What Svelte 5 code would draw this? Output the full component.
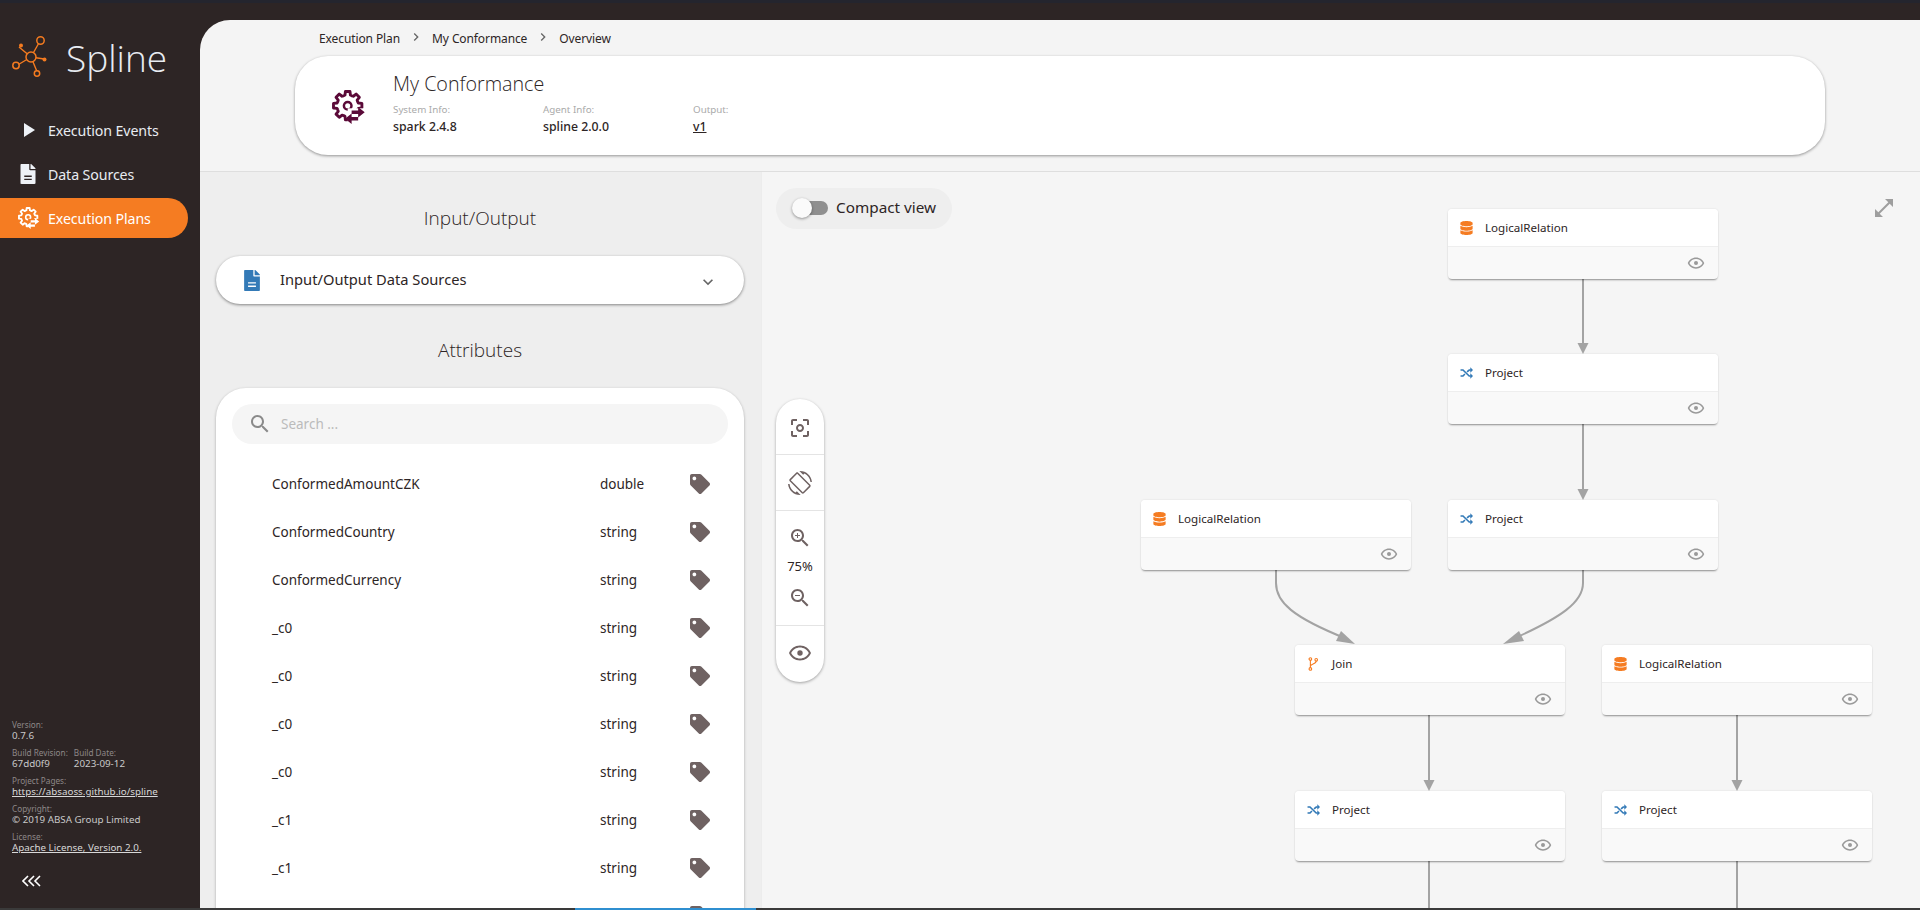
<script>
	const attributes = [
		["ConformedAmountCZK", "double"],
		["ConformedCountry", "string"],
		["ConformedCurrency", "string"],
		["_c0", "string"],
		["_c0", "string"],
		["_c0", "string"],
		["_c0", "string"],
		["_c1", "string"],
		["_c1", "string"],
		["", ""],
	];

	// page coordinates minus the canvas origin (762, 172)
	const nodes = [
		{ x: 686, y: 37, kind: "read", name: "LogicalRelation" },
		{ x: 686, y: 182, kind: "project", name: "Project" },
		{ x: 379, y: 328, kind: "read", name: "LogicalRelation" },
		{ x: 686, y: 328, kind: "project", name: "Project" },
		{ x: 533, y: 473, kind: "join", name: "Join" },
		{ x: 840, y: 473, kind: "read", name: "LogicalRelation" },
		{ x: 533, y: 619, kind: "project", name: "Project" },
		{ x: 840, y: 619, kind: "project", name: "Project" },
	];

	const edges = [
		{ d: "M821 106V171", tip: "815.5,171 826.5,171 821,182" },
		{ d: "M821 252V317", tip: "815.5,317 826.5,317 821,328" },
		{ d: "M514 397V411C514 430 530 445 585 467", tip: "579,459 574,469 593,472" },
		{ d: "M821 397V411C821 430 800 445 751 467", tip: "757,459 762,469 741,472" },
		{ d: "M667 543V608", tip: "661.5,608 672.5,608 667,619" },
		{ d: "M975 543V608", tip: "969.5,608 980.5,608 975,619" },
		{ d: "M667 688V740", tip: "" },
		{ d: "M975 688V740", tip: "" },
	];

	const gearPath = (() => {
		let p = "";
		for (let i = 0; i < 8; i++) {
			const a = (i * Math.PI) / 4 - Math.PI / 2;
			const w = 0.2;
			const pts = [
				[8.2, a - 0.39],
				[8.4, a - w - 0.05],
				[11, a - w + 0.04],
				[11, a + w - 0.04],
				[8.4, a + w + 0.05],
				[8.2, a + 0.39],
			];
			for (const [r, t] of pts) {
				p += (p ? "L" : "M") + (12 + r * Math.cos(t)).toFixed(2) + " " + (12 + r * Math.sin(t)).toFixed(2);
			}
		}
		return p + "Z";
	})();
</script>

{#snippet gearIcon(cls, cut)}
	<svg class={cls} viewBox="0 0 26 26">
		<path d={gearPath} fill="none" stroke="currentColor" stroke-width="2.2" stroke-linejoin="round" />
		<circle cx="12" cy="12" r="2.9" fill="none" stroke="currentColor" stroke-width="1.9" />
		<rect x="12" y="14" width="14" height="12" fill={cut} />
		<path d="M15 15.6h5v-2.6l5 4-5 4v-2.6h-5z" fill="currentColor" />
		<path d="M20 20.6h-5V18l-5 4 5 4v-2.6h5z" fill="currentColor" />
	</svg>
{/snippet}

{#snippet eyeIcon(cls)}
	<svg class={cls} viewBox="0 0 24 24">
		<path d="M12 6.5c3.79 0 7.17 2.13 8.82 5.5-1.65 3.37-5.02 5.5-8.82 5.5S4.83 15.37 3.18 12C4.83 8.63 8.21 6.5 12 6.5m0-2C7 4.5 2.73 7.61 1 12c1.73 4.39 6 7.5 11 7.5s9.27-3.11 11-7.5c-1.73-4.39-6-7.5-11-7.5z" />
		<circle cx="12" cy="12" r="2.7" />
	</svg>
{/snippet}

<div class="app">
	<div class="topline"></div>
	<div class="shell">
		<aside class="sidebar">
			<div class="brand">
				<svg class="logo" viewBox="0 0 36 42">
					<g fill="none" stroke="#f47b20" stroke-width="1.4">
						<path d="M19 21L28 5M7 11L19 21M4 30L19 21M19 21L26 38M19 21L32 23" />
					</g>
					<circle cx="19" cy="21" r="5" fill="#2d2525" stroke="#f47b20" stroke-width="1.5" />
					<circle cx="28.5" cy="4.5" r="3.7" fill="#2d2525" stroke="#f47b20" stroke-width="1.5" />
					<circle cx="4" cy="29.5" r="3.2" fill="#2d2525" stroke="#f47b20" stroke-width="1.5" />
					<circle cx="25" cy="37.5" r="2.7" fill="#2d2525" stroke="#f47b20" stroke-width="1.5" />
					<circle cx="9" cy="9.5" r="2" fill="#f47b20" />
					<circle cx="32.5" cy="23.5" r="2" fill="#f47b20" />
				</svg>
				<span class="brand-name">Spline</span>
			</div>
			<nav class="nav">
				<div class="nav-item">
					<svg class="nav-icon" viewBox="0 0 16 20"><path d="M4 3L15 10L4 17z" /></svg>
					Execution Events
				</div>
				<div class="nav-item">
					<svg class="nav-icon" viewBox="0 0 384 512">
						<path fill-rule="evenodd" d="M224 136V0H24C10.7 0 0 10.7 0 24v464c0 13.3 10.7 24 24 24h336c13.3 0 24-10.7 24-24V160H248c-13.2 0-24-10.8-24-24zM96 296h192v36H96zM96 376h192v36H96z" />
						<path d="M384 121.9v6.1H256V0h6.1c6.4 0 12.5 2.5 17 7l97.9 98c4.5 4.5 7 10.6 7 16.9z" />
					</svg>
					Data Sources
				</div>
				<div class="nav-item active">
					{@render gearIcon("nav-gear", "#f57c22")}
					Execution Plans
				</div>
			</nav>
			<footer class="about">
				<div class="label">Version:</div>
				<div class="value">0.7.6</div>
				<div class="about-row">
					<div>
						<div class="label">Build Revision:</div>
						<div class="value">67dd0f9</div>
					</div>
					<div>
						<div class="label">Build Date:</div>
						<div class="value">2023-09-12</div>
					</div>
				</div>
				<div class="label">Project Pages:</div>
				<div class="value link">https://absaoss.github.io/spline</div>
				<div class="label">Copyright:</div>
				<div class="value">© 2019 ABSA Group Limited</div>
				<div class="label">License:</div>
				<div class="value link">Apache License, Version 2.0.</div>
				<svg class="collapse" viewBox="0 0 20 12">
					<path d="M6 1L1 6l5 5M12 1L7 6l5 5M18 1l-5 5 5 5" fill="none" stroke="#fff" stroke-width="1.6" />
				</svg>
			</footer>
		</aside>

		<main class="main">
			<header class="header">
				<div class="crumbs">
					<span>Execution Plan</span>
					<svg class="crumb-sep" viewBox="0 0 24 24"><path d="M10 6L8.59 7.41 13.17 12l-4.58 4.59L10 18l6-6z" /></svg>
					<span>My Conformance</span>
					<svg class="crumb-sep" viewBox="0 0 24 24"><path d="M10 6L8.59 7.41 13.17 12l-4.58 4.59L10 18l6-6z" /></svg>
					<span>Overview</span>
				</div>
				<div class="plan-card">
					{@render gearIcon("plan-gear", "#fff")}
					<div class="plan-info">
						<h1>My Conformance</h1>
						<div class="plan-meta">
							<div>
								<div class="meta-label">System Info:</div>
								<div class="meta-value">spark 2.4.8</div>
							</div>
							<div>
								<div class="meta-label">Agent Info:</div>
								<div class="meta-value">spline 2.0.0</div>
							</div>
							<div>
								<div class="meta-label">Output:</div>
								<div class="meta-value underline">v1</div>
							</div>
						</div>
					</div>
				</div>
			</header>

			<div class="panels">
				<section class="side">
					<h2>Input/Output</h2>
					<div class="accordion">
						<svg class="doc" viewBox="0 0 384 512">
							<path fill-rule="evenodd" d="M224 136V0H24C10.7 0 0 10.7 0 24v464c0 13.3 10.7 24 24 24h336c13.3 0 24-10.7 24-24V160H248c-13.2 0-24-10.8-24-24zM96 296h192v36H96zM96 376h192v36H96z" />
							<path d="M384 121.9v6.1H256V0h6.1c6.4 0 12.5 2.5 17 7l97.9 98c4.5 4.5 7 10.6 7 16.9z" />
						</svg>
						<span class="accordion-title">Input/Output Data Sources</span>
						<svg class="chevron" viewBox="0 0 24 24"><path d="M7.41 8.59L12 13.17l4.59-4.58L18 10l-6 6-6-6z" /></svg>
					</div>
					<h2 class="attr-title">Attributes</h2>
					<div class="attr-card">
						<div class="search">
							<svg class="search-icon" viewBox="0 0 24 24"><path d="M15.5 14h-.79l-.28-.27C15.41 12.59 16 11.11 16 9.5 16 5.91 13.09 3 9.5 3S3 5.91 3 9.5 5.91 16 9.5 16c1.61 0 3.09-.59 4.23-1.57l.27.28v.79l5 4.99L20.49 19l-4.99-5zm-6 0C7.01 14 5 11.99 5 9.5S7.01 5 9.5 5 14 7.01 14 9.5 11.99 14 9.5 14z" /></svg>
							<span>Search ...</span>
						</div>
						<div class="attr-list">
							{#each attributes as [name, type]}
								<div class="attr-row">
									<span>{name}</span>
									<span>{type}</span>
									<svg class="tag" viewBox="0 0 512 512"><path fill-rule="evenodd" d="M0 252.118V48C0 21.49 21.49 0 48 0h204.118a48 48 0 0 1 33.941 14.059l211.882 211.882c18.745 18.745 18.745 49.137 0 67.882L293.823 497.941c-18.745 18.745-49.137 18.745-67.882 0L14.059 286.059A48 48 0 0 1 0 252.118zM112 64c-26.51 0-48 21.49-48 48s21.49 48 48 48 48-21.49 48-48-21.49-48-48-48z" /></svg>
								</div>
							{/each}
						</div>
					</div>
				</section>

				<section class="canvas">
					<svg class="edges" width="1158" height="740">
						{#each edges as edge}
							<path d={edge.d} fill="none" stroke="#a3a3a3" stroke-width="2" />
							{#if edge.tip}<polygon points={edge.tip} fill="#a3a3a3" />{/if}
						{/each}
					</svg>

					{#each nodes as node}
						<div class="node" style="left: {node.x}px; top: {node.y}px">
							<div class="node-head">
								{#if node.kind === "read"}
									<svg class="node-icon read" viewBox="0 0 448 512"><path d="M448 73.143v45.714C448 159.143 347.667 192 224 192S0 159.143 0 118.857V73.143C0 32.857 100.333 0 224 0s224 32.857 224 73.143zM448 176v102.857C448 319.143 347.667 352 224 352S0 319.143 0 278.857V176c48.125 33.143 136.208 48.572 224 48.572S399.874 209.143 448 176zm0 160v102.857C448 479.143 347.667 512 224 512S0 479.143 0 438.857V336c48.125 33.143 136.208 48.572 224 48.572S399.874 369.143 448 336z" /></svg>
								{:else if node.kind === "project"}
									<svg class="node-icon project" viewBox="0 0 24 24">
										<path d="M1 6.5h4.5L17 17.5h3M1 17.5h4.5l3.6-3.6M13 10l4-3.5h3" fill="none" stroke="currentColor" stroke-width="3" />
										<path d="M19 1.5L24 6.5 19 11.5zM19 12.5L24 17.5 19 22.5z" fill="currentColor" />
									</svg>
								{:else}
									<svg class="node-icon join" viewBox="0 0 14 18">
										<g fill="none" stroke="currentColor" stroke-width="1.4">
											<circle cx="3" cy="2.6" r="1.7" />
											<circle cx="3" cy="15.4" r="1.7" />
											<circle cx="10.5" cy="3.6" r="1.7" />
											<path d="M3 4.3V13.7M10.5 5.3C10.5 9.5 3 8.5 3 12" />
										</g>
									</svg>
								{/if}
								<span>{node.name}</span>
							</div>
							<div class="node-foot">
								{@render eyeIcon("node-eye")}
							</div>
						</div>
					{/each}

					<div class="compact">
						<span class="track"><span class="thumb"></span></span>
						<span class="compact-label">Compact view</span>
					</div>

					<svg class="expand" viewBox="0 0 24 24"><path d="M21 11V3h-8l3.29 3.29-10 10L3 13v8h8l-3.29-3.29 10-10z" /></svg>

					<div class="tools">
						<div class="tool focus">
							<svg class="tool-icon" viewBox="0 0 24 24"><path d="M5 15H3v4c0 1.1.9 2 2 2h4v-2H5v-4zM5 5h4V3H5c-1.1 0-2 .9-2 2v4h2V5zm14-2h-4v2h4v4h2V5c0-1.1-.9-2-2-2zm0 16h-4v2h4c1.1 0 2-.9 2-2v-4h-2v4zM12 8c-2.21 0-4 1.79-4 4s1.79 4 4 4 4-1.79 4-4-1.79-4-4-4zm0 6c-1.1 0-2-.9-2-2s.9-2 2-2 2 .9 2 2-.9 2-2 2z" /></svg>
						</div>
						<div class="tool">
							<svg class="tool-icon" viewBox="0 0 24 24"><path d="M16.48 2.52c3.27 1.55 5.61 4.72 5.97 8.48h1.5C23.44 4.84 18.29 0 12 0l-.66.03 3.81 3.81 1.33-1.32zm-6.25-.77c-.59-.59-1.54-.59-2.12 0L1.75 8.11c-.59.59-.59 1.54 0 2.12l12.02 12.02c.59.59 1.54.59 2.12 0l6.36-6.36c.59-.59.59-1.54 0-2.12L10.23 1.75zm4.6 19.44L2.81 9.17l6.36-6.36 12.02 12.02-6.36 6.36zm-7.31.29C4.25 19.94 1.91 16.76 1.55 13H.05C.56 19.16 5.71 24 12 24l.66-.03-3.81-3.81-1.33 1.32z" /></svg>
						</div>
						<div class="tool zoom">
							<svg class="tool-icon" viewBox="0 0 24 24"><path d="M15.5 14h-.79l-.28-.27C15.41 12.59 16 11.11 16 9.5 16 5.91 13.09 3 9.5 3S3 5.91 3 9.5 5.91 16 9.5 16c1.61 0 3.09-.59 4.23-1.57l.27.28v.79l5 4.99L20.49 19l-4.99-5zm-6 0C7.01 14 5 11.99 5 9.5S7.01 5 9.5 5 14 7.01 14 9.5 11.99 14 9.5 14zM12 10h-2v2H9v-2H7V9h2V7h1v2h2v1z" /></svg>
							<span class="zoom-value">75%</span>
							<svg class="tool-icon" viewBox="0 0 24 24"><path d="M15.5 14h-.79l-.28-.27C15.41 12.59 16 11.11 16 9.5 16 5.91 13.09 3 9.5 3S3 5.91 3 9.5 5.91 16 9.5 16c1.61 0 3.09-.59 4.23-1.57l.27.28v.79l5 4.99L20.49 19l-4.99-5zm-6 0C7.01 14 5 11.99 5 9.5S7.01 5 9.5 5 14 7.01 14 9.5 11.99 14 9.5 14zM7 9h5v1H7z" /></svg>
						</div>
						<div class="tool eye">
							{@render eyeIcon("tool-icon")}
						</div>
					</div>
				</section>
			</div>
		</main>
	</div>
	<div class="taskbar"><span></span></div>
</div>

<style>
	:global(body) {
		margin: 0;
		background: #2d2525;
	}

	.app {
		display: flex;
		flex-direction: column;
		height: 910px;
		overflow: hidden;
		font-family: "Noto Sans", sans-serif;
		color: #2d2525;
	}

	.topline {
		height: 3px;
		background: #24252e;
	}

	.shell {
		flex: 1;
		display: flex;
		min-height: 0;
		background: #2d2525;
		padding-top: 17px;
	}

	.taskbar {
		height: 2px;
		background: #3a3a3a;
		padding-left: 575px;
	}

	.taskbar span {
		display: block;
		width: 181px;
		height: 2px;
		background: #2f8fd0;
	}

	/* sidebar */
	.sidebar {
		width: 200px;
		flex: none;
		display: flex;
		flex-direction: column;
		margin-top: -17px;
		color: #e8ecf2;
	}

	.brand {
		display: flex;
		align-items: center;
		gap: 18px;
		padding: 33px 0 0 12px;
		height: 42px;
	}

	.logo {
		width: 36px;
		height: 42px;
		flex: none;
	}

	.brand-name {
		font-family: "Open Sans", sans-serif;
		font-size: 37px;
		font-weight: 300;
	}

	.nav {
		margin-top: 32px;
		display: flex;
		flex-direction: column;
		gap: 4px;
		width: 188px;
	}

	.nav-item {
		height: 40px;
		display: flex;
		align-items: center;
		font-size: 14.2px;
		padding-left: 48px;
		position: relative;
		letter-spacing: -0.1px;
	}

	.nav-icon {
		position: absolute;
		left: 19px;
		top: 10px;
		width: 18px;
		height: 20px;
		fill: #eef2f7;
	}

	.nav-item.active {
		background: #f57c22;
		border-radius: 0 20px 20px 0;
		color: #fff;
	}

	.nav-item :global(.nav-gear) {
		position: absolute;
		left: 18px;
		top: 9px;
		width: 22px;
		height: 22px;
		color: #fff;
	}

	.about {
		margin-top: auto;
		padding: 0 0 21px 12px;
	}

	.about-row {
		display: flex;
		gap: 6px;
	}

	.label {
		font-size: 8.2px;
		line-height: 10px;
		color: #8d8888;
		margin-top: 6px;
		white-space: nowrap;
	}

	.value {
		font-size: 9.8px;
		line-height: 12px;
		color: #c9c9c9;
		white-space: nowrap;
	}

	.link {
		text-decoration: underline;
		color: #d8d8d8;
	}

	.collapse {
		display: block;
		width: 20px;
		height: 12px;
		margin: 21px 0 0 10px;
	}

	/* main */
	.main {
		flex: 1;
		min-width: 0;
		display: flex;
		flex-direction: column;
		background: #f4f4f4;
		border-radius: 30px 0 0 0;
		overflow: hidden;
	}

	.header {
		height: 151px;
		flex: none;
		border-bottom: 1px solid #dedede;
	}

	.crumbs {
		height: 36px;
		display: flex;
		align-items: center;
		padding-left: 119px;
		font-size: 12px;
		letter-spacing: -0.1px;
		color: #2d2525;
	}

	.crumb-sep {
		width: 16px;
		height: 16px;
		fill: #666;
		margin: 0 8px 2px 8px;
	}

	.plan-card {
		margin: 0 95px;
		height: 99px;
		background: #fff;
		border-radius: 33px;
		box-shadow: 0 1px 3px rgba(0, 0, 0, 0.4);
		display: flex;
		align-items: center;
		padding-left: 37px;
		gap: 27px;
	}

	.plan-card :global(.plan-gear) {
		width: 34px;
		height: 34px;
		color: #5b0a38;
		flex: none;
		margin-top: 3px;
	}

	.plan-info {
		margin-bottom: 5px;
	}

	.plan-info h1 {
		margin: 0 0 6px;
		font-family: "Open Sans", sans-serif;
		font-size: 19.7px;
		line-height: 26px;
		font-weight: 300;
		color: #2d2525;
	}

	.plan-meta {
		display: grid;
		grid-template-columns: 150px 150px 150px;
	}

	.meta-label {
		font-size: 9.8px;
		line-height: 14px;
		color: #aaa;
	}

	.meta-value {
		font-size: 12.3px;
		line-height: 19px;
		font-weight: 500;
		color: #2d2525;
	}

	.underline {
		text-decoration: underline;
	}

	.panels {
		flex: 1;
		display: flex;
		min-height: 0;
	}

	.side {
		width: 561px;
		flex: none;
		background: #eee;
		padding: 0 17px 0 16px;
		box-sizing: border-box;
		overflow: hidden;
	}

	h2 {
		margin: 34px 0 26px;
		text-align: center;
		font-family: "Open Sans", sans-serif;
		font-size: 19px;
		line-height: 24px;
		font-weight: 300;
		color: #2d2525;
	}

	.accordion {
		height: 48px;
		background: #fff;
		border-radius: 24px;
		box-shadow: 0 1px 3px rgba(0, 0, 0, 0.45);
		display: flex;
		align-items: center;
		padding-left: 28px;
		font-size: 14.7px;
		color: #2d2525;
	}

	.doc {
		width: 16px;
		height: 21px;
		fill: #337ab7;
		flex: none;
	}

	.accordion-title {
		margin-left: 20px;
		flex: 1;
		padding-bottom: 2px;
	}

	.chevron {
		width: 20px;
		height: 20px;
		fill: #666;
		margin: 4px 26px 0 0;
	}

	.attr-card {
		background: #fff;
		border-radius: 30px 30px 0 0;
		box-shadow: 0 1px 3px rgba(0, 0, 0, 0.3);
		padding: 16px 16px 0;
		height: 600px;
	}

	.search {
		height: 40px;
		border-radius: 20px;
		background: #f5f5f5;
		display: flex;
		align-items: center;
		padding-left: 16px;
		font-size: 13.5px;
		color: #bbb;
		gap: 9px;
	}

	.search-icon {
		width: 24px;
		height: 24px;
		fill: #8a8a8a;
	}

	.attr-list {
		margin-top: 16px;
	}

	.attr-row {
		height: 48px;
		display: grid;
		grid-template-columns: 328px 90px 20px;
		align-items: center;
		padding-left: 40px;
		font-size: 13.5px;
		color: #2d2525;
	}

	.tag {
		width: 20px;
		height: 20px;
		fill: #6f6262;
	}

	/* graph */
	.canvas {
		flex: 1;
		position: relative;
		background: #f5f5f5;
		border-left: 1px solid #ececec;
		overflow: hidden;
	}

	.edges {
		position: absolute;
		left: 0;
		top: 0;
	}

	.node {
		position: absolute;
		width: 270px;
		height: 70px;
		border-radius: 4px;
		background: #f9f9f9;
		box-shadow: 0 2px 2px -1px rgba(0, 0, 0, 0.4), 0 0 2px rgba(0, 0, 0, 0.12);
		overflow: hidden;
	}

	.node-head {
		height: 38px;
		background: #fff;
		border-bottom: 1px solid #eee;
		box-sizing: border-box;
		display: flex;
		align-items: center;
		padding-left: 12px;
		font-size: 11.6px;
		color: #2d2525;
	}

	.node-icon {
		width: 13px;
		height: 14px;
		flex: none;
		margin-right: 12px;
	}

	.read {
		fill: #f57c22;
	}

	.project {
		color: #337ab7;
	}

	.join {
		color: #f57c22;
		fill: none;
	}

	.node-foot {
		height: 32px;
		display: flex;
		align-items: center;
		justify-content: flex-end;
		padding-right: 13px;
	}

	.node-foot :global(.node-eye) {
		width: 18px;
		height: 18px;
		fill: #9a9a9a;
	}

	.compact {
		position: absolute;
		left: 14px;
		top: 16px;
		width: 176px;
		height: 41px;
		box-sizing: border-box;
		border-radius: 21px;
		background: #eee;
		display: flex;
		align-items: center;
		padding-left: 17px;
		font-size: 15.3px;
		gap: 8px;
		color: #2d2525;
	}

	.compact-label {
		margin-bottom: 3px;
	}

	.track {
		width: 35px;
		height: 14px;
		border-radius: 7px;
		background: #8f8f8f;
		position: relative;
		flex: none;
		margin-bottom: 2px;
	}

	.thumb {
		position: absolute;
		left: -1px;
		top: -3px;
		width: 20px;
		height: 20px;
		border-radius: 50%;
		background: #fafafa;
		box-shadow: 0 1px 3px rgba(0, 0, 0, 0.4);
	}

	.expand {
		position: absolute;
		left: 1110px;
		top: 24px;
		width: 24px;
		height: 24px;
		fill: #9e9e9e;
	}

	.tools {
		position: absolute;
		left: 14px;
		top: 227px;
		width: 48px;
		height: 283px;
		background: #fff;
		border-radius: 24px;
		box-shadow: 0 1px 3px rgba(0, 0, 0, 0.35);
		display: flex;
		flex-direction: column;
	}

	.tool {
		display: flex;
		align-items: center;
		justify-content: center;
		height: 56px;
		border-bottom: 1px solid #e4e4e4;
		flex: none;
		box-sizing: border-box;
	}

	.tool:last-child {
		border-bottom: 0;
	}

	.tool :global(.tool-icon) {
		width: 24px;
		height: 24px;
		fill: #6f6262;
	}

	.focus {
		padding-top: 2px;
	}

	.eye {
		padding-bottom: 3px;
	}

	.zoom {
		height: 115px;
		flex-direction: column;
		gap: 10px;
		font-size: 13px;
		line-height: 16px;
		color: #2d2525;
	}

	.zoom-value {
		margin-top: -2px;
		margin-bottom: 2px;
	}
</style>
